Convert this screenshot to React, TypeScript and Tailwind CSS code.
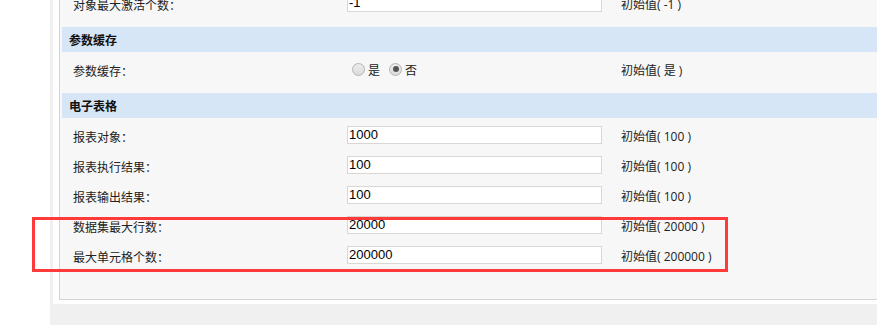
const font = { fontFamily: '"Noto Sans CJK SC", "Microsoft YaHei", sans-serif' };
const initFont = { fontFamily: '"Open Sans", "Noto Sans CJK SC", sans-serif' };

type Row = { label: string; value: string; init: string };

const topRows: Row[] = [{ label: "对象最大激活个数：", value: "-1", init: "-1" }];

const sheetRows: Row[] = [
  { label: "报表对象：", value: "1000", init: "100" },
  { label: "报表执行结果：", value: "100", init: "100" },
  { label: "报表输出结果：", value: "100", init: "100" },
  { label: "数据集最大行数：", value: "20000", init: "20000" },
  { label: "最大单元格个数：", value: "200000", init: "200000" },
];

function Radio({ checked }: { checked?: boolean }) {
  return (
    <span className="ml-[5px] mr-[3px] flex h-[13px] w-[13px] items-center justify-center rounded-full border border-[#b4b4b4] bg-gradient-to-b from-[#ececec] to-[#dcdcdc]">
      {checked && <span className="h-[6px] w-[6px] rounded-full bg-[#555]" />}
    </span>
  );
}

function InputRow({ row }: { row: Row }) {
  return (
    <div className="flex h-[30px] items-center">
      <div className="w-[285px] pl-[11px] pt-[3px] text-[12px] text-[#222]">{row.label}</div>
      <div
        className="flex h-[18px] w-[255px] items-center border border-[#dad7d2] bg-white pl-[1px] text-[13px] text-black"
        style={{ fontFamily: '"Liberation Sans", Arial, sans-serif' }}
      >
        {row.value}
      </div>
      <div className="ml-[19px] pt-[3px] text-[12px] text-[#222]" style={initFont}>
        初始值( {row.init} )
      </div>
    </div>
  );
}

function Header({ title }: { title: string }) {
  return (
    <div className="mt-[9px] flex h-[25px] items-center bg-[#d6e6f6] pl-[7px] text-[12px] font-bold text-[#111]">
      {title}
    </div>
  );
}

export default function App() {
  return (
    <div className="relative flex h-[325px] w-[877px] overflow-hidden bg-white" style={font}>
      <div className="w-[50px] shrink-0" />
      <div className="flex flex-1 flex-col bg-[#f0f0f0] pb-[21px] pl-[3px]">
        <div className="-mt-[12px] bg-white pb-[4px] pl-[6px]">
          <div className="border-b border-l border-[#d4d4d4] bg-[#f7f7f7] pb-[29px] pl-[2px]">
            {topRows.map((r) => (
              <InputRow key={r.label} row={r} />
            ))}

            <Header title="参数缓存" />
            <div className="mt-[2px] flex h-[30px] items-center">
              <div className="w-[285px] pl-[11px] pt-[3px] text-[12px] text-[#222]">参数缓存：</div>
              <div className="flex w-[274px] items-center text-[12px] text-[#222]">
                <Radio />
                <span className="pt-[2px]">是</span>
                <span className="ml-[4px] flex items-center">
                  <Radio checked />
                  <span className="pt-[2px]">否</span>
                </span>
              </div>
              <div className="pt-[3px] text-[12px] text-[#222]" style={initFont}>
                初始值( 是 )
              </div>
            </div>

            <Header title="电子表格" />
            <div className="mt-[2px]">
              {sheetRows.map((r) => (
                <InputRow key={r.label} row={r} />
              ))}
            </div>
          </div>
        </div>
      </div>

      {/* annotation box */}
      <div className="absolute left-[32px] top-[217px] h-[55px] w-[696px] border-[3px] border-[#fe3a3a]" />
    </div>
  );
}
